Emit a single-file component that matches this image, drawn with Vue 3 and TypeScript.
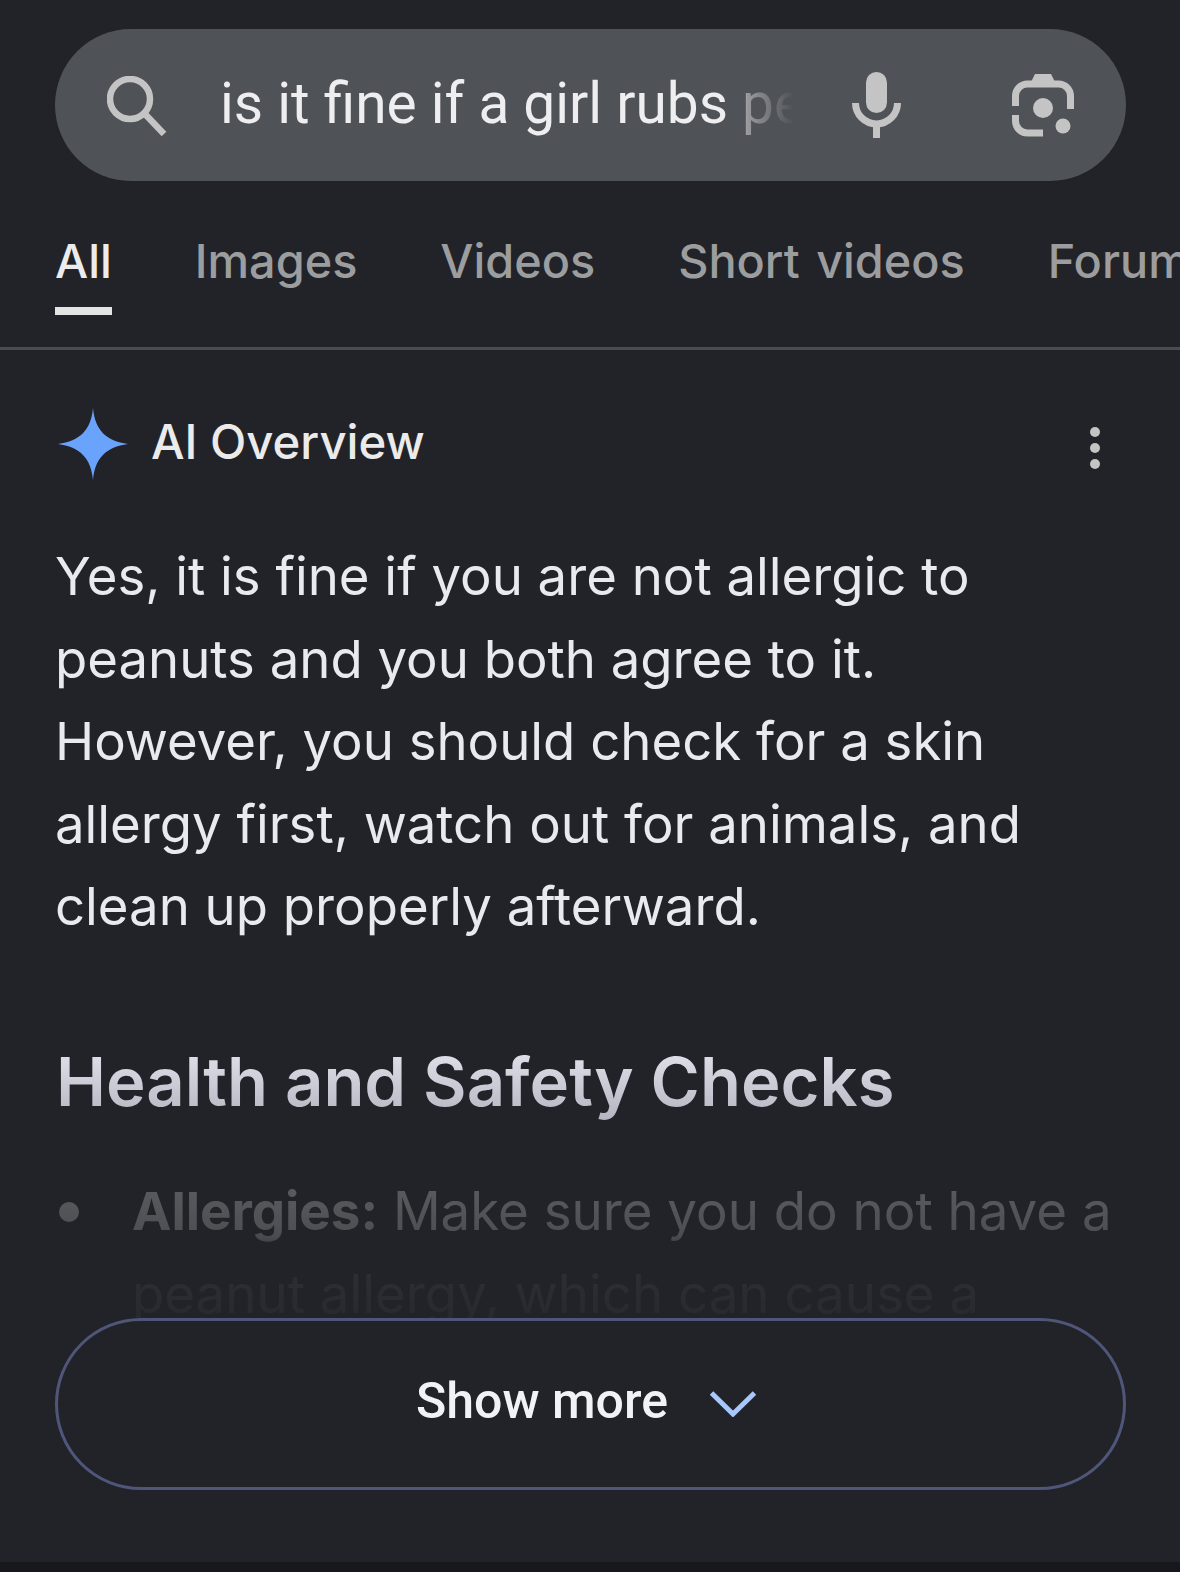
<script setup lang="ts">
const tabs = ['All', 'Images', 'Videos', 'Short videos', 'Forums']
const answer =
  'Yes, it is fine if you are not allergic to peanuts and you both agree to it. However, you should check for a skin allergy first, watch out for animals, and clean up properly afterward.'
</script>

<template>
  <div class="page">
    <div class="search-wrap">
      <div class="search">
        <svg class="icon-search" viewBox="0 0 60 60" fill="none" stroke="#c4c4c5" stroke-width="6.5">
          <circle cx="23" cy="23" r="20" />
          <path d="M37 37 57 58" />
        </svg>
        <div class="query">is it fine if a girl rubs pe</div>
        <svg class="icon-mic" viewBox="0 0 49 66" fill="#c4c4c5">
          <rect x="14" y="0" width="21" height="41" rx="10.5" />
          <path d="M3.5 31a21 21 0 0 0 42 0" fill="none" stroke="#c4c4c5" stroke-width="7" />
          <rect x="21" y="52" width="7" height="14" />
        </svg>
        <svg class="icon-lens" viewBox="0 0 62 63" fill="#c4c4c5">
          <path
            d="M3.5 32V22a12 12 0 0 1 12-12h31a12 12 0 0 1 12 12v13M3.5 41v6a12 12 0 0 0 12 12H31"
            fill="none"
            stroke="#c4c4c5"
            stroke-width="7"
          />
          <path d="M19 8 23 0h16l4 8z" />
          <circle cx="31" cy="34" r="10" />
          <circle cx="51" cy="52" r="7.5" />
        </svg>
      </div>
    </div>

    <nav class="tabs">
      <div v-for="(tab, i) in tabs" :key="tab" class="tab" :class="{ active: i === 0 }">{{ tab }}</div>
    </nav>

    <section class="overview">
      <div class="overview-head">
        <svg class="icon-star" viewBox="0 0 70 72">
          <path d="M35 0C37 22 48 33 70 36 48 39 37 50 35 72 33 50 22 39 0 36 22 33 33 22 35 0z" fill="#6aa3fb" />
        </svg>
        <span class="overview-title">AI Overview</span>
        <div class="dots"><i></i><i></i><i></i></div>
      </div>

      <p class="answer">{{ answer }}</p>
      <h2 class="heading">Health and Safety Checks</h2>

      <ul class="checks">
        <li>
          <span class="bullet"></span>
          <span><b>Allergies:</b> Make sure you do not have a peanut allergy, which can cause a</span>
        </li>
      </ul>
    </section>

    <button class="more">
      <span>Show more</span>
      <svg class="icon-chevron" viewBox="0 0 46 26" fill="none" stroke="#a8c7fa" stroke-width="5">
        <path d="M1.5 2 23 23 44.5 2" />
      </svg>
    </button>

    <div class="spacer"></div>
    <div class="bottom-strip"></div>
  </div>
</template>

<style scoped>
.page {
  height: 1572px;
  display: flex;
  flex-direction: column;
  background: #222328;
  overflow: hidden;
  font-family: Inter, Roboto, "Liberation Sans", sans-serif;
}

.search-wrap {
  padding: 29px 54px 0 55px;
}

.search {
  height: 152px;
  border-radius: 76px;
  background: #4f5257;
  display: flex;
  align-items: center;
  padding: 0 52px 0 52px;
}

.icon-search {
  width: 60px;
  height: 60px;
  flex: none;
  margin-top: 2px;
}

.query {
  width: 574px;
  margin-left: 53px;
  margin-bottom: 2px;
  flex: none;
  font-family: Roboto, "Liberation Sans", sans-serif;
  font-size: 56.8px;
  line-height: 70px;
  color: #eeeef0;
  white-space: nowrap;
  overflow: hidden;
  -webkit-mask-image: linear-gradient(to right, #000 88%, rgba(0, 0, 0, 0.45) 92%, transparent 100%);
  mask-image: linear-gradient(to right, #000 88%, rgba(0, 0, 0, 0.45) 92%, transparent 100%);
}

.icon-mic {
  width: 49px;
  height: 66px;
  flex: none;
  margin-left: 58px;
}

.icon-lens {
  width: 62px;
  height: 63px;
  flex: none;
  margin-left: auto;
  margin-top: 1px;
}

.tabs {
  display: flex;
  gap: 83px;
  padding: 50px 0 0 55px;
  box-sizing: border-box;
  border-bottom: 3px solid #4b4c51;
  overflow: hidden;
  height: 169px;
}

.tab {
  flex: none;
  height: 76px;
  font-size: 46.8px;
  font-weight: 500;
  word-spacing: 4px;
  line-height: 60px;
  color: #9c9d9f;
  white-space: nowrap;
}

.tab.active {
  color: #ececed;
  border-bottom: 8px solid #e4e4e5;
}

.overview {
  padding: 0 55px;
  height: 968px;
  box-sizing: border-box;
  overflow: hidden;
}

.overview-head {
  display: flex;
  align-items: center;
  height: 72px;
  margin-top: 58px;
  padding-left: 3px;
}

.icon-star {
  width: 70px;
  height: 72px;
  flex: none;
}

.overview-title {
  margin-left: 23px;
  margin-bottom: 5px;
  font-size: 47.3px;
  font-weight: 500;
  color: #ebebec;
}

.dots {
  margin-left: auto;
  margin-right: 25px;
  display: flex;
  flex-direction: column;
  gap: 6px;
  margin-top: 8px;
}

.dots i {
  display: block;
  width: 10px;
  height: 10px;
  border-radius: 50%;
  background: #c4c4c5;
}

.answer {
  margin: 55px 0 0;
  width: 1000px;
  font-size: 52.7px;
  line-height: 82.5px;
  color: #e8eaf0;
}

.heading {
  margin: 94px 0 0 1px;
  font-size: 67px;
  line-height: 80px;
  font-weight: 600;
  background: linear-gradient(to bottom, #e6e6f0, #b4b4c0);
  -webkit-background-clip: text;
  background-clip: text;
  color: transparent;
  width: max-content;
}

.checks {
  list-style: none;
  margin: 48px 0 0;
  padding: 0;
  font-size: 52.8px;
  line-height: 83px;
  color: #e8eaed;
  -webkit-mask-image: linear-gradient(to bottom, rgba(0, 0, 0, 0.3) 0, rgba(0, 0, 0, 0.22) 38%, rgba(0, 0, 0, 0.06) 55%, rgba(0, 0, 0, 0.03) 100%);
  mask-image: linear-gradient(to bottom, rgba(0, 0, 0, 0.3) 0, rgba(0, 0, 0, 0.22) 38%, rgba(0, 0, 0, 0.06) 55%, rgba(0, 0, 0, 0.03) 100%);
}

.checks li {
  display: flex;
}

.bullet {
  flex: none;
  width: 20px;
  height: 20px;
  margin: 32px 53px 0 4px;
  border-radius: 50%;
  background: #e8eaed;
}

.checks b {
  font-weight: 700;
}

.more {
  flex: none;
  margin: 0 54px 0 55px;
  height: 172px;
  border: 3px solid #50567a;
  border-radius: 86px;
  background: #222328;
  display: flex;
  align-items: center;
  justify-content: center;
  gap: 42px;
  font-family: Roboto, "Liberation Sans", sans-serif;
  font-size: 50px;
  font-weight: 500;
  color: #f1f1f6;
  padding: 0 9px 6px 0;
}

.icon-chevron {
  width: 46px;
  height: 26px;
  flex: none;
  margin-top: 6px;
}

.spacer {
  flex: 1;
}

.bottom-strip {
  flex: none;
  height: 10px;
  background: #17181b;
}
</style>

<style>
html,
body {
  margin: 0;
  background: #222328;
}
</style>
